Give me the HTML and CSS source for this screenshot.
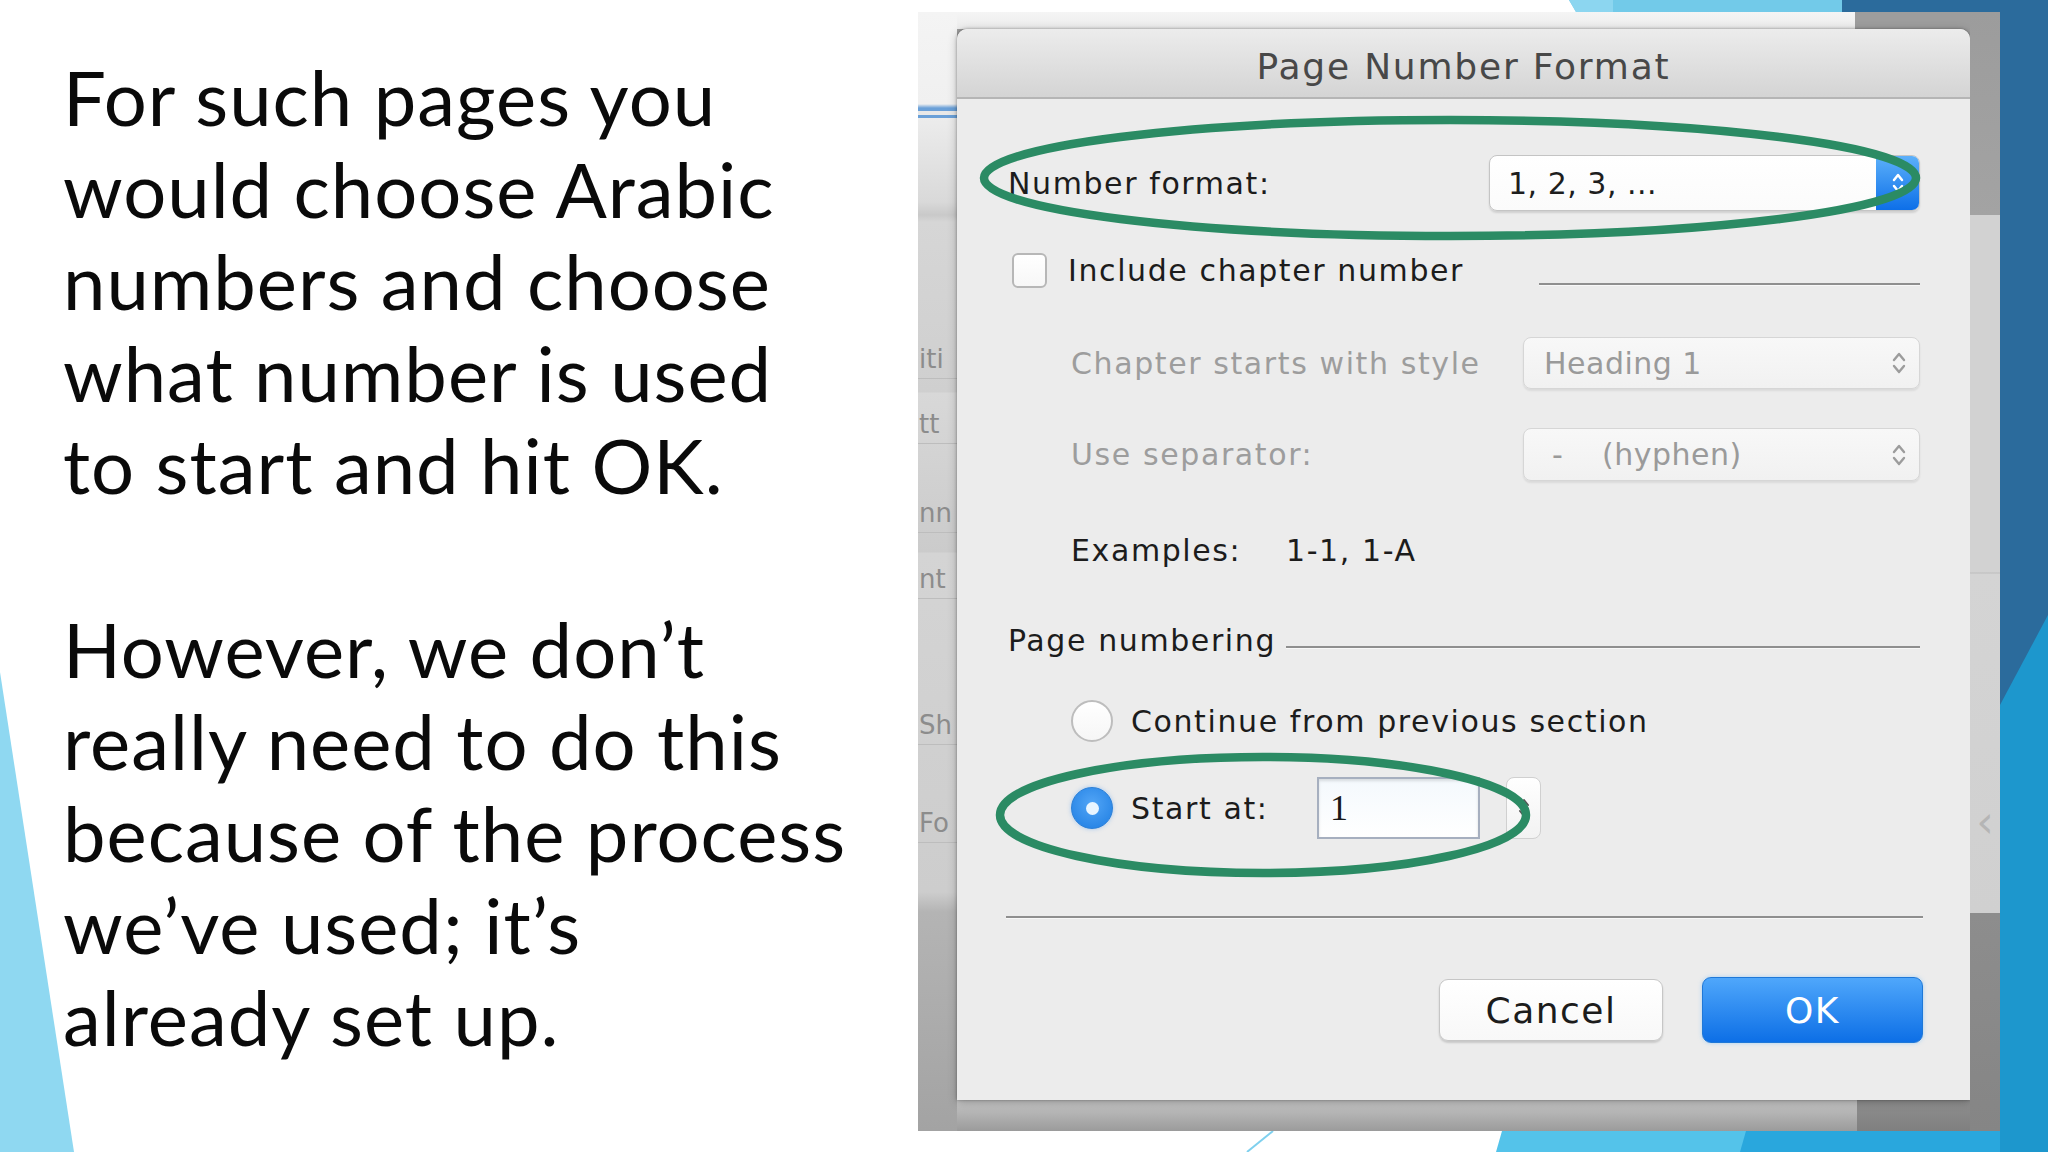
FILE: index.html
```html
<!DOCTYPE html>
<html>
<head>
<meta charset="utf-8">
<title>Page Number Format</title>
<link rel="stylesheet" href="styles.css">
</head>
<body>
<div class="slide">
  <svg class="decor" viewBox="0 0 2048 1152" width="2048" height="1152">
    <polygon points="0,672 74,1152 0,1152" fill="#8fd8f1"/>
    <polygon points="1569,0 1842,0 1842,12 1576,12" fill="#72cae9"/>
    <polygon points="1569,0 1613,0 1613,12 1576,12" fill="#8cd6f0"/>
    <rect x="1842" y="0" width="206" height="12" fill="#2b6b9c"/>
    <rect x="2000" y="0" width="48" height="1152" fill="#2b6b9c"/>
    <polygon points="2000,705 2048,615 2048,1152 2000,1152" fill="#1d97cd"/>
    <polygon points="1502,1131 2000,1131 2000,1152 1496,1152" fill="#54c3ea"/>
    <polygon points="1746,1131 2000,1131 2000,1152 1740,1152" fill="#29a7dd"/>
    <line x1="1273" y1="1131" x2="1247" y2="1152" stroke="#7fd0ee" stroke-width="2"/>
  </svg>

  <div class="text-col">
    <p class="para">For such pages you<br>would choose Arabic<br>numbers and choose<br>what number is used<br>to start and hit OK.</p>
    <p class="para">However, we don’t<br>really need to do this<br>because of the process<br>we’ve used; it’s<br>already set up.</p>
  </div>

  <div class="shot">
    <div class="side">
      <div class="frag f1">iti</div>
      <div class="frag f2">tt</div>
      <div class="frag f3">nn</div>
      <div class="frag f4">nt</div>
      <div class="frag f5">Sh</div>
      <div class="frag f6">Fo</div>
    </div>

    <div class="dialog">
      <div class="titlebar">Page Number Format</div>
      <div class="dlg-body">
        <div class="row r-format">
          <span class="lbl w-format">Number format:</span>
          <div class="popup popup-main">
            <span class="pop-text">1, 2, 3, ...</span>
            <span class="pop-arrow">
              <svg width="16" height="30" viewBox="0 0 16 30"><path d="M4 12 L8 7 L12 12 M4 18 L8 23 L12 18" fill="none" stroke="#ffffff" stroke-width="2.5" stroke-linecap="round" stroke-linejoin="round"/></svg>
            </span>
          </div>
        </div>

        <div class="row r-check">
          <span class="checkbox"></span>
          <span class="lbl ml-check">Include chapter number</span>
          <span class="rule-right"></span>
        </div>

        <div class="row r-chapter">
          <span class="lbl dis indent">Chapter starts with style</span>
          <div class="popup popup-dis">
            <span class="pop-text">Heading 1</span>
            <svg class="chev" width="16" height="30" viewBox="0 0 16 30"><path d="M3 12 L8 6 L13 12 M3 18 L8 24 L13 18" fill="none" stroke="#9c9c9c" stroke-width="2.4" stroke-linecap="round" stroke-linejoin="round"/></svg>
          </div>
        </div>

        <div class="row r-sep">
          <span class="lbl dis indent">Use separator:</span>
          <div class="popup popup-dis">
            <span class="pop-text"><span class="hy">-</span>(hyphen)</span>
            <svg class="chev" width="16" height="30" viewBox="0 0 16 30"><path d="M3 12 L8 6 L13 12 M3 18 L8 24 L13 18" fill="none" stroke="#9c9c9c" stroke-width="2.4" stroke-linecap="round" stroke-linejoin="round"/></svg>
          </div>
        </div>

        <div class="row r-examples">
          <span class="lbl indent w-ex">Examples:</span>
          <span class="lbl">1-1, 1-A</span>
        </div>

        <div class="row r-paging">
          <span class="lbl">Page numbering</span>
          <span class="rule-fill"></span>
        </div>

        <div class="row r-continue">
          <span class="radio"></span>
          <span class="lbl ml-radio">Continue from previous section</span>
        </div>

        <div class="row r-start">
          <span class="radio on"><span class="dot"></span></span>
          <span class="lbl ml-radio w-start">Start at:</span>
          <div class="numbox">1</div>
          <div class="stepper">
            <svg width="14" height="30" viewBox="0 0 14 30"><path d="M3 12 L7 7 L11 12 M3 18 L7 23 L11 18" fill="none" stroke="#555555" stroke-width="2" stroke-linecap="round" stroke-linejoin="round"/></svg>
          </div>
        </div>

        <div class="hr"></div>

        <div class="row r-buttons">
          <div class="btn cancel">Cancel</div>
          <div class="btn ok">OK</div>
        </div>
      </div>
    </div>

    <div class="rside"><span class="lt">&lsaquo;</span></div>
  </div>

  <svg class="marks" viewBox="0 0 2048 1152" width="2048" height="1152">
    <ellipse cx="1450" cy="178" rx="466" ry="58" fill="none" stroke="#2b8b64" stroke-width="8.5"/>
    <ellipse cx="1263" cy="815" rx="263" ry="58" fill="none" stroke="#2b8b64" stroke-width="8.5"/>
  </svg>
</div>
</body>
</html>
```

FILE: styles.css
```css
* { box-sizing: border-box; }

html, body {
  margin: 0;
  padding: 0;
  background: #ffffff;
}

.slide {
  position: relative;
  width: 2048px;
  height: 1152px;
  overflow: hidden;
  display: flex;
  align-items: flex-start;
  background: #ffffff;
}

.decor {
  position: absolute;
  left: 0;
  top: 0;
  z-index: 0;
}

.marks {
  position: absolute;
  left: 0;
  top: 0;
  z-index: 3;
  pointer-events: none;
}

/* ---------- left text ---------- */
.text-col {
  position: relative;
  z-index: 1;
  width: 918px;
  flex: none;
  padding: 51px 0 0 63px;
}

.para {
  margin: 0 0 92px 0;
  font-family: Lato, "Open Sans", sans-serif;
  font-size: 76px;
  line-height: 92px;
  letter-spacing: 1px;
  color: #0a0a0a;
  white-space: nowrap;
}

/* ---------- screenshot ---------- */
.shot {
  position: relative;
  z-index: 1;
  flex: none;
  margin-top: 12px;
  width: 1082px;
  height: 1119px;
  display: grid;
  grid-template-columns: 39px 1013px 30px;
  grid-template-rows: 17px 1071px 31px;
  background:
    linear-gradient(#f5f5f5, #ececec) 0 0 / 937px 17px no-repeat,
    linear-gradient(#c6c6c6, #9b9b9b) 0 100% / 939px 31px no-repeat,
    linear-gradient(#8f8f8f, #7f7f7f) 100% 100% / 143px 31px no-repeat,
    #9d9d9d;
  font-family: "DejaVu Sans", "Liberation Sans", sans-serif;
}

.side {
  grid-column: 1;
  grid-row: 1 / 4;
  display: flex;
  flex-direction: column;
  background:
    linear-gradient(to bottom,
      #f4f4f4 0, #f0f0f0 92px,
      #6aa0d8 96px, #6aa0d8 99px, #e8e8e8 99px, #e8e8e8 103px,
      #6aa0d8 103px, #6aa0d8 106px, #ececec 106px,
      #d9d9d9 190px, #c9c9c9 203px, #d6d6d6 210px,
      #cfcfcf 380px, #d8d8d8 381px, #cbcbcb 540px, #d4d4d4 541px,
      #cdcdcd 880px, #b4b4b4 900px, #a3a3a3 1119px);
}

.frag {
  height: 40px;
  line-height: 40px;
  font-size: 26px;
  color: #8c8c8c;
  white-space: nowrap;
  padding-left: 1px;
  border-bottom: 1px solid #bdbdbd;
}
.f1 { margin-top: 327px; }
.f2 { margin-top: 25px; }
.f3 { margin-top: 49px; }
.f4 { margin-top: 26px; }
.f5 { margin-top: 106px; }
.f6 { margin-top: 58px; }

.rside {
  grid-column: 3;
  grid-row: 1 / 4;
  display: flex;
  flex-direction: column;
  align-items: center;
  background:
    linear-gradient(to bottom,
      #9c9c9c 0, #a3a3a3 203px, #d2d2d2 203px,
      #d2d2d2 560px, #bdbdbd 561px, #d4d4d4 562px,
      #d0d0d0 901px, #8d8d8d 901px, #858585 1119px);
}
.lt {
  margin-top: 785px;
  font-size: 44px;
  line-height: 50px;
  color: #b5b5b5;
}

/* ---------- dialog ---------- */
.dialog {
  grid-column: 2;
  grid-row: 2;
  display: flex;
  flex-direction: column;
  background: #ececec;
  border-radius: 10px 10px 0 0;
  box-shadow: 0 0 3px rgba(0,0,0,0.35), 0 2px 10px rgba(0,0,0,0.25);
  overflow: hidden;
}

.titlebar {
  height: 70px;
  flex: none;
  display: flex;
  align-items: center;
  justify-content: center;
  font-size: 36px;
  letter-spacing: 1.8px;
  color: #484848;
  background: linear-gradient(#ececec, #d4d4d4);
  border-bottom: 2px solid #b5b5b5;
  padding-top: 6px;
}

.dlg-body {
  flex: 1;
  display: flex;
  flex-direction: column;
  padding: 56px 50px 0 51px;
}

.row {
  display: flex;
  align-items: center;
  flex: none;
}

.lbl {
  font-size: 30px;
  letter-spacing: 1.6px;
  color: #1c1c1c;
  white-space: nowrap;
}
.lbl.dis { color: #9d9d9d; }
.indent { margin-left: 63px; }

.r-format { height: 56px; }
.w-format { width: 481px; }

.popup {
  display: flex;
  align-items: center;
  border-radius: 8px;
  font-size: 30px;
  letter-spacing: 0.5px;
  white-space: nowrap;
}

.popup-main {
  width: 431px;
  height: 56px;
  background: linear-gradient(#ffffff, #fbfbfb);
  border: 1px solid #c4c4c4;
  box-shadow: 0 2px 2px rgba(0,0,0,0.12);
  color: #1e1e1e;
  overflow: hidden;
}
.popup-main .pop-text {
  flex: 1;
  padding-left: 18px;
}
.pop-arrow {
  width: 43px;
  height: 100%;
  display: flex;
  align-items: center;
  justify-content: center;
  background: linear-gradient(#5cb0fa, #0d6fe8);
}

.popup-dis {
  margin-left: auto;
  width: 397px;
  background: linear-gradient(#f8f8f8, #f1f1f1);
  border: 1px solid #d6d6d6;
  box-shadow: 0 2px 2px rgba(0,0,0,0.08);
  color: #9a9a9a;
  padding-left: 20px;
  padding-right: 12px;
}
.popup-dis .pop-text { flex: 1; }
.hy { display: inline-block; width: 58px; padding-left: 8px; }

.r-check { height: 40px; margin-top: 39px; }
.checkbox {
  width: 35px;
  height: 35px;
  margin-left: 4px;
  flex: none;
  background: linear-gradient(#ffffff, #f7f7f7);
  border: 2px solid #b7b7b7;
  border-radius: 6px;
}
.ml-check { margin-left: 21px; }
.rule-right {
  margin-left: auto;
  align-self: flex-end;
  margin-bottom: 4px;
  width: 381px;
  height: 3px;
  background: #8f8f8f;
  border-bottom: 1px solid #f8f8f8;
}

.r-chapter { height: 52px; margin-top: 47px; }
.r-chapter .popup-dis { height: 52px; }
.r-sep { height: 53px; margin-top: 39px; }
.r-sep .popup-dis { height: 53px; }

.r-examples { height: 40px; margin-top: 49px; }
.w-ex { width: 215px; }

.r-paging { height: 40px; margin-top: 50px; }
.rule-fill {
  flex: 1;
  margin-left: 10px;
  margin-top: 14px;
  height: 3px;
  background: #8f8f8f;
  border-bottom: 1px solid #f8f8f8;
}

.r-continue { height: 44px; margin-top: 39px; }
.radio {
  width: 42px;
  height: 42px;
  margin-left: 63px;
  flex: none;
  border-radius: 50%;
  background: linear-gradient(#ffffff, #f6f6f6);
  border: 2px solid #bdbdbd;
  display: flex;
  align-items: center;
  justify-content: center;
}
.radio.on {
  background: radial-gradient(circle at 50% 40%, #52a5f6, #1d7de2);
  border: 1px solid #2a7fd8;
  box-shadow: 0 0 4px rgba(90,160,240,0.5);
}
.dot {
  width: 13px;
  height: 13px;
  border-radius: 50%;
  background: #e9f5ff;
}
.ml-radio { margin-left: 18px; }

.r-start { height: 62px; margin-top: 34px; }
.w-start { width: 186px; }
.numbox {
  width: 163px;
  height: 62px;
  flex: none;
  background: linear-gradient(#f4f9fd, #ffffff);
  border: 2px solid #a6afbf;
  box-shadow: inset 0 2px 3px rgba(0,0,0,0.12);
  font-family: "Liberation Serif", "DejaVu Serif", serif;
  font-size: 36px;
  line-height: 58px;
  padding-left: 11px;
  color: #1a1a1a;
}
.stepper {
  width: 35px;
  height: 62px;
  margin-left: 26px;
  flex: none;
  border: 1px solid #d0d0d0;
  border-radius: 8px;
  background: linear-gradient(#ffffff, #f2f2f2);
  display: flex;
  align-items: center;
  justify-content: center;
}

.hr {
  flex: none;
  height: 3px;
  margin: 77px -3px 0 -2px;
  background: #8f8f8f;
  border-bottom: 1px solid #f8f8f8;
}

.r-buttons {
  height: 66px;
  margin-top: 58px;
  justify-content: flex-end;
}
.btn {
  display: flex;
  align-items: center;
  justify-content: center;
  border-radius: 9px;
  font-size: 36px;
  letter-spacing: 1.5px;
  flex: none;
}
.cancel {
  width: 224px;
  height: 62px;
  margin-right: 39px;
  background: linear-gradient(#ffffff, #f8f8f8);
  border: 1px solid #c6c6c6;
  box-shadow: 0 2px 2px rgba(0,0,0,0.15);
  color: #1c1c1c;
}
.ok {
  width: 221px;
  height: 66px;
  margin-right: -3px;
  background: linear-gradient(#4fa7fb, #0d6fe6);
  border: 1px solid #1f78d8;
  box-shadow: 0 0 4px rgba(120,190,250,0.6);
  color: #ffffff;
}
```
